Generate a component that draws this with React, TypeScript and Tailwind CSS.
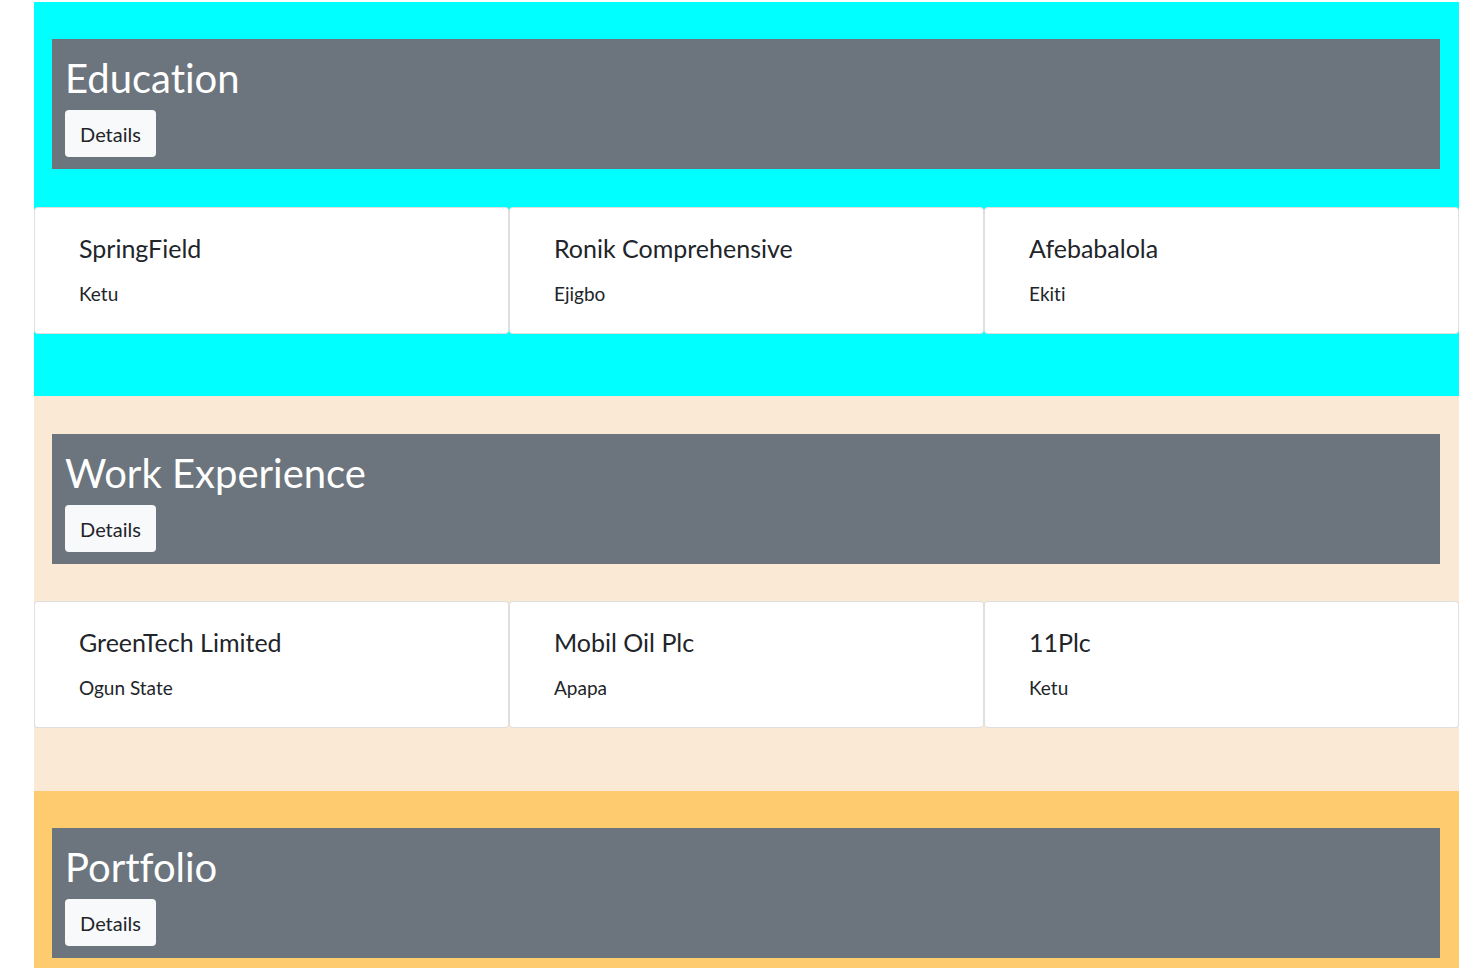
const sections = [
  {
    title: "Education",
    bg: "bg-[#00ffff]",
    box: "h-[394px] pt-[37px]",
    gap: "mt-[38px]",
    items: [
      { name: "SpringField", place: "Ketu" },
      { name: "Ronik Comprehensive", place: "Ejigbo" },
      { name: "Afebabalola", place: "Ekiti" },
    ],
  },
  {
    title: "Work Experience",
    bg: "bg-[#faead5]",
    box: "h-[395px] pt-[38px]",
    gap: "mt-[37px]",
    items: [
      { name: "GreenTech Limited", place: "Ogun State" },
      { name: "Mobil Oil Plc", place: "Apapa" },
      { name: "11Plc", place: "Ketu" },
    ],
  },
  {
    title: "Portfolio",
    bg: "bg-[#fecb6f]",
    box: "h-[395px] pt-[37px]",
    gap: "mt-[38px]",
    items: [],
  },
];

type Item = { name: string; place: string };

const Card = ({ item }: { item: Item }) => (
  <div className="h-[127px] rounded border border-black/[.125] bg-white pl-[44px] pt-[25px] text-[#212529]">
    <div className="text-[25px] leading-[30px]">{item.name}</div>
    <div className="mt-[19px] text-[19px] leading-[23px]">{item.place}</div>
  </div>
);

export default function App() {
  return (
    <div className="min-h-screen bg-white pt-[2px] font-['Lato','Liberation_Sans',sans-serif] [font-variant-ligatures:none]">
      <div className="ml-[34px] w-[1425px]">
        {sections.map((s) => (
          <section key={s.title} className={`${s.bg} ${s.box}`}>
            <div className="ml-[18px] mr-[19px] h-[130px] bg-[#6c757d] px-[13px] pt-[15px]">
              <h1 className="text-[40px] leading-[48px] text-white">{s.title}</h1>
              <button className="mt-[8px] h-[47px] w-[91px] rounded bg-[#f8f9fa] text-[20px] text-[#212529]">
                Details
              </button>
            </div>
            {s.items.length > 0 && (
              <div className={`${s.gap} grid grid-cols-3`}>
                {s.items.map((it) => (
                  <Card key={it.name} item={it} />
                ))}
              </div>
            )}
          </section>
        ))}
      </div>
    </div>
  );
}
